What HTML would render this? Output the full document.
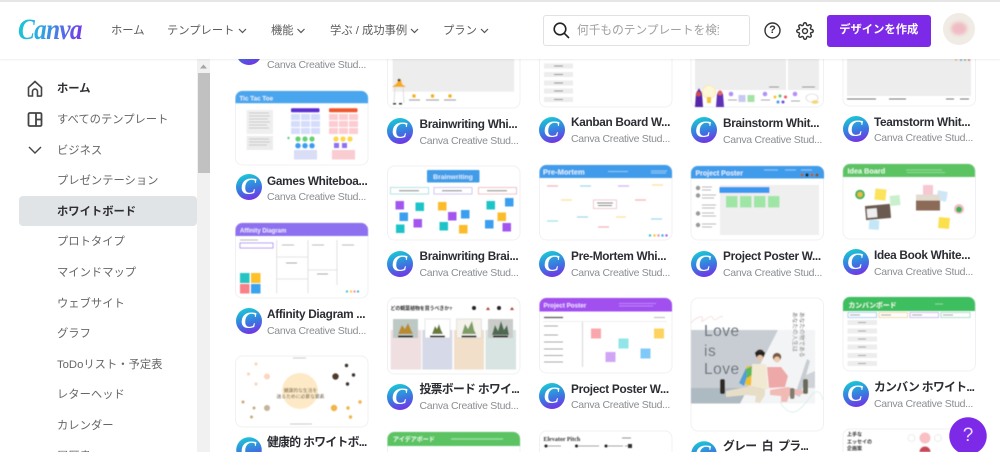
<!DOCTYPE html>
<html lang="ja"><head><meta charset="utf-8"><title>Canva</title>
<style>
html,body{margin:0;padding:0;width:1000px;height:452px;overflow:hidden;background:#fff}
body{font-family:"Liberation Sans","Noto Sans CJK JP",sans-serif;color:#555}
#w{position:absolute;left:0;top:0;width:1000px;height:452px;overflow:hidden;background:#fff}
#w div,#w span{position:absolute;white-space:nowrap}
#w svg{position:absolute;left:0;top:0}
#w .t{font-weight:bold;font-size:11.8px;line-height:16px;color:#2b2d33;letter-spacing:-.3px}
#w .j{letter-spacing:-.65px}
#w .s{font-size:10.5px;line-height:16px;color:#8b8e93;letter-spacing:-.3px}
#w .a{width:26px;height:26px;border-radius:50%;background:linear-gradient(165deg,#18cdd4 5%,#3a78e0 55%,#7a2be6 95%);background-size:26px 26px;background-repeat:no-repeat;color:#fff;font:italic bold 23px/25px "Liberation Serif",serif;text-align:center;text-indent:-1px}
#w .c{border-radius:0;overflow:hidden;-webkit-mask:radial-gradient(circle 13px at 13px 13px,#000 96%,transparent 100%);mask:radial-gradient(circle 13px at 13px 13px,#000 96%,transparent 100%)}
#w .n{font-size:11.3px;line-height:16px;color:#666;left:57px}
#w .h{font-size:11.3px;line-height:16px;color:#5c5c5c;top:23px}
.st text{font-family:"Liberation Sans","Noto Sans CJK JP",sans-serif}
</style></head><body><div id="w">

<svg width="1000" height="452" viewBox="0 0 1000 452" class="st">
<defs><filter id="b"><feGaussianBlur stdDeviation=".5"/></filter></defs>
<g fill="#fff" stroke="#f0f1f2" stroke-width="1">
<rect x="235.500" y="20" width="132.500" height="28" rx="7"/>
<rect x="235.500" y="91" width="132.500" height="74" rx="7"/>
<rect x="235.500" y="223" width="132.500" height="75" rx="7"/>
<rect x="235.500" y="356" width="132.500" height="71" rx="7"/>
<rect x="387.500" y="30" width="132.500" height="78" rx="7"/>
<rect x="387.500" y="166" width="132.500" height="74" rx="7"/>
<rect x="387.500" y="298" width="132.500" height="76" rx="7"/>
<path d="M387.500 452V439a7 7 0 0 1 7-7H513a7 7 0 0 1 7 7v13"/>
<rect x="539.500" y="30" width="132.500" height="77" rx="7"/>
<rect x="539.500" y="165" width="132.500" height="75" rx="7"/>
<rect x="539.500" y="298" width="132.500" height="75" rx="7"/>
<path d="M539.500 452V438a7 7 0 0 1 7-7H665a7 7 0 0 1 7 7v14"/>
<rect x="691" y="30" width="132.500" height="77" rx="7"/>
<rect x="691" y="166" width="132.500" height="74" rx="7"/>
<rect x="691" y="298" width="132.500" height="133" rx="7"/>
<rect x="843" y="30" width="132.500" height="76" rx="7"/>
<rect x="843" y="164" width="132.500" height="75" rx="7"/>
<rect x="843" y="297" width="132.500" height="74" rx="7"/>
<path d="M843 452V436a7 7 0 0 1 7-7H968a7 7 0 0 1 7 7v16"/>
</g>
<g filter="url(#b)">
<!-- Tic tac toe -->
<path d="M235.500 103.300V98a7 7 0 0 1 7-7H361a7 7 0 0 1 7 7v5.300z" fill="#4aa5ee"/>
<text x="239.500" y="100.500" font-size="6.300" font-weight="bold" fill="#dff0ff">Tic Tac Toe</text>
<rect x="246.700" y="110" width="26.300" height="24" fill="#efefef"/><rect x="246.700" y="136" width="26.300" height="14" fill="#ececec"/>
<path d="M249 113h20M249 116h21M249 119h19M249 122h21M249 125h18M249 128h20M249 139h20M249 142h21M249 145h18" stroke="#bbb" stroke-width=".7"/>
<rect x="291" y="108.300" width="28.500" height="4" rx="1" fill="#5a2fd2"/><rect x="329" y="108.300" width="28.500" height="4" rx="1" fill="#f0562e"/>
<g fill="#d6ddfb"><rect x="291" y="114" width="9" height="6"/><rect x="301" y="114" width="9" height="6"/><rect x="311" y="114" width="9" height="6"/><rect x="291" y="121" width="9" height="6"/><rect x="301" y="121" width="9" height="6"/><rect x="311" y="121" width="9" height="6"/><rect x="291" y="128" width="9" height="6"/><rect x="301" y="128" width="9" height="6"/><rect x="311" y="128" width="9" height="6"/></g>
<g fill="#fbcdd2"><rect x="329" y="114" width="9" height="6"/><rect x="339" y="114" width="9" height="6"/><rect x="349" y="114" width="9" height="6"/><rect x="329" y="121" width="9" height="6"/><rect x="339" y="121" width="9" height="6"/><rect x="349" y="121" width="9" height="6"/><rect x="329" y="128" width="9" height="6"/><rect x="339" y="128" width="9" height="6"/><rect x="349" y="128" width="9" height="6"/></g>
<g fill="#63d173"><circle cx="298" cy="139" r="2.600"/><circle cx="305" cy="139" r="2.600"/><circle cx="312" cy="139" r="2.600"/><circle cx="288.500" cy="138" r="1.200"/></g>
<g fill="#3d9cf0"><circle cx="298" cy="145.700" r="2.700"/><circle cx="305" cy="145.700" r="2.700"/><circle cx="312" cy="145.700" r="2.700"/></g>
<g fill="#fdd648"><circle cx="336" cy="139" r="2.600"/><circle cx="343" cy="139" r="2.600"/><circle cx="350" cy="139" r="2.600"/></g>
<rect x="334" y="143" width="5" height="5" fill="#9270f2"/><rect x="342" y="143" width="5" height="5" fill="#9270f2"/>
<rect x="294" y="150" width="23" height="9.500" fill="#d9ddf6"/><rect x="332" y="150" width="23" height="9.500" fill="#f9ccd2"/>

<!-- Affinity -->
<path d="M235.500 236v-6a7 7 0 0 1 7-7H361a7 7 0 0 1 7 7v6z" fill="#8d6ff0"/>
<text x="240" y="232.500" font-size="6" font-weight="bold" fill="#efe9ff">Affinity Diagram</text>
<rect x="240" y="243" width="33" height="5" fill="#fff" stroke="#9a6af0" stroke-width=".7"/>
<path d="M240 240h18M282 245h12M312 245h12M342 245h12" stroke="#bbb" stroke-width="1"/>
<path d="M276.700 240V293M308 240V293M337 240V285M277 279h31M308 270h29M277 257h31" stroke="#ccc" stroke-width=".6" fill="none"/>
<path d="M286 263h11M317 274h11" stroke="#aaa" stroke-width="1"/>
<rect x="240" y="273" width="9.500" height="10" fill="#27c3c3"/><rect x="251" y="273" width="9.500" height="10" fill="#fcc02c"/><rect x="240" y="284" width="9.500" height="9.500" fill="#f88089"/><rect x="251" y="284" width="9.500" height="9.500" fill="#3aa2ee"/>
<circle cx="347" cy="291.500" r="1.100" fill="#27c3c3"/><circle cx="351" cy="291.500" r="1.100" fill="#fcc02c"/><circle cx="354.500" cy="291.500" r="1.100" fill="#f88089"/><circle cx="358" cy="291.500" r="1.100" fill="#3aa2ee"/>

<!-- Health -->
<circle cx="300" cy="391" r="18" fill="#fde9c6"/>
<text x="300.500" y="392" font-size="4.800" text-anchor="middle" fill="#6a5a40">健康的な生活を</text>
<text x="300.500" y="398" font-size="4.800" text-anchor="middle" fill="#6a5a40">送るために必要な要素</text>
<circle cx="335.500" cy="376.500" r="3.200" fill="#4d3a2c"/><circle cx="346.500" cy="365.500" r="1.700" fill="#3b332e"/><circle cx="353.500" cy="375" r="1.700" fill="#3b332e"/><circle cx="347.500" cy="384" r="1.700" fill="#3b332e"/>
<circle cx="267" cy="376.500" r="3" fill="#fbd5bd"/><circle cx="256" cy="364" r="1.500" fill="#fbd1b5"/><circle cx="248.500" cy="374" r="1.500" fill="#fbd1b5"/><circle cx="256" cy="384" r="1.500" fill="#fbd1b5"/>
<circle cx="334" cy="408" r="3.200" fill="#f0b44a"/><circle cx="348" cy="408" r="1.700" fill="#f0b44a"/><circle cx="360" cy="402" r="1.700" fill="#f0b44a"/><circle cx="350.500" cy="417" r="1.700" fill="#f0b44a"/>
<circle cx="267" cy="408" r="3" fill="#c5b39a"/><circle cx="243" cy="402" r="1.500" fill="#c9ab80"/><circle cx="254" cy="408" r="1.500" fill="#c9ab80"/><circle cx="251.500" cy="417" r="1.500" fill="#c9ab80"/>
<path d="M293 358h13M290 424h22" stroke="#bbb" stroke-width=".8"/>

<!-- Col 2 top -->
<rect x="392.700" y="50" width="121.500" height="41.700" fill="#ededed"/>
<path d="M392 87h14l-4-3-1-5h-3l-1 4z" fill="#f4ac1c"/><circle cx="399" cy="80" r="1.300" fill="#333"/><path d="M395 87l-1 16M403 87l1 16" stroke="#ddd" stroke-width="1"/><rect x="393" y="103" width="3" height="1.500" fill="#333"/><rect x="399" y="103" width="3" height="1.500" fill="#333"/>
<g fill="#f5ac18"><circle cx="414" cy="96" r="1.700"/><circle cx="432.500" cy="96" r="1.700"/><circle cx="450" cy="96" r="1.700"/></g>
<path d="M409 100h11M426 100h13M444 100h12" stroke="#aaa" stroke-width="1.300"/>

<!-- Brainwriting -->
<rect x="427" y="170" width="52.500" height="12.500" fill="#3f9be8" rx="1"/>
<text x="453" y="179" font-size="6.800" font-weight="bold" text-anchor="middle" fill="#d7ecff">Brainwriting</text>
<g fill="#fff" stroke-width=".7"><rect x="390.500" y="187.500" width="38" height="6.500" stroke="#8fd3dc"/><rect x="434" y="187.500" width="38" height="6.500" stroke="#bdaaf0"/><rect x="478.500" y="187.500" width="38" height="6.500" stroke="#e8a5b0"/></g>
<path d="M399 190.800h20M442 190.800h20M487 190.800h20" stroke="#777" stroke-width="1"/>
<g fill="#a357ee"><rect x="395.500" y="201" width="8.500" height="8.500"/><rect x="413.500" y="219" width="8.500" height="8.500"/><rect x="448" y="212" width="8.500" height="8.500"/><rect x="502.500" y="223" width="8.500" height="8.500"/></g>
<g fill="#1fc3c8"><rect x="415.500" y="202.500" width="8.500" height="8.500"/><rect x="396" y="224.500" width="8.500" height="8.500"/><rect x="439.500" y="222" width="8.500" height="8.500"/><rect x="486.500" y="201" width="8.500" height="8.500"/></g>
<g fill="#3a9ff0"><rect x="399.500" y="212.500" width="8.500" height="8.500"/><rect x="461" y="210" width="8.500" height="8.500"/><rect x="485" y="220" width="8.500" height="8.500"/><rect x="505" y="198" width="8.500" height="8.500"/></g>
<g fill="#fcbb2c"><rect x="438" y="202" width="8.500" height="8.500"/><rect x="459" y="225" width="8.500" height="8.500"/><rect x="497.500" y="212.500" width="8.500" height="8.500"/></g>

<!-- 投票 -->
<text x="390.500" y="310" font-size="4.900" font-weight="bold" fill="#333">どの観葉植物を買うべきか?</text>
<circle cx="474" cy="308" r="2" fill="#222"/><circle cx="499" cy="308" r="2" fill="#222"/><path d="M486 310l2-3 2 3zM510 310l2-3 2 3z" fill="#a83a30"/>
<rect x="390.700" y="330" width="30.500" height="39.500" fill="#f0dfe1"/><rect x="422.300" y="330" width="30" height="39.500" fill="#d5d9e8"/><rect x="454" y="330" width="30" height="39.500" fill="#f2dfc9"/><rect x="485.500" y="330" width="30.500" height="39.500" fill="#d7e4e2"/>
<rect x="393" y="319" width="25" height="19" fill="#bdc9c4"/><rect x="425" y="319" width="25" height="19" fill="#fff" stroke="#ccc" stroke-width=".5"/><rect x="456.500" y="319" width="25" height="19" fill="#f4f2ea" stroke="#ccc" stroke-width=".5"/><rect x="488" y="319" width="25" height="19" fill="#c9ccc9"/>
<path d="M398 334l4-9 3 4 3-6 3 7 2 4z" fill="#b98b2d"/><path d="M432 334l3-8 2 3 2-5 2 6 2 4z" fill="#677a35"/><path d="M462 334l3-10 3 5 4-8 2 9 2 4z" fill="#7d9c66"/><path d="M492 335l3-10 3 6 3-10 3 9 3-5 2 10z" fill="#4d6a50"/>
<rect x="398" y="335.500" width="15" height="1.800" fill="#111"/><rect x="430" y="335.500" width="15" height="1.800" fill="#111"/><rect x="461.500" y="335.500" width="15" height="1.800" fill="#111"/><rect x="493" y="335.500" width="15" height="1.800" fill="#111"/>

<!-- Kanban list top -->
<g fill="#ededed"><rect x="544" y="63.500" width="29" height="5"/><rect x="544" y="72" width="29" height="5"/><rect x="544" y="80.500" width="29" height="5"/><rect x="544" y="88.500" width="29" height="5"/><rect x="544" y="97" width="29" height="5"/></g>
<path d="M554 66h9M554 74.500h9M554 83h9M554 91h9M554 99.500h9" stroke="#888" stroke-width=".9"/>
<g fill="#ededed"><rect x="544" y="50" width="29" height="9"/></g>

<!-- Pre-mortem -->
<path d="M539.500 178v-6a7 7 0 0 1 7-7H665a7 7 0 0 1 7 7v6z" fill="#3f9ceb"/>
<text x="543" y="174.500" font-size="7.500" font-weight="bold" fill="#dff0ff">Pre-Mortem</text>
<path d="M608 171.500h20M651 171h16M651 173h15" stroke="#a8d4f8" stroke-width=".8"/>
<rect x="593.500" y="200" width="23" height="8.500" fill="#fff" stroke="#e3a5ad" stroke-width=".6"/><path d="M597 203h16M598 205.500h14" stroke="#555" stroke-width=".9"/>
<g stroke-width="1.300"><path d="M547 186h11" stroke="#f5b5bc"/><path d="M580 186h11" stroke="#a5d9ec"/><path d="M618 186h11" stroke="#d0b4f5"/><path d="M652 185h11" stroke="#fbe2a0"/><path d="M561 200h11" stroke="#fbe2a0"/><path d="M635 200h11" stroke="#f5b5bc"/><path d="M547 221h11" stroke="#a5e2e2"/><path d="M577 217h11" stroke="#a5d9ec"/><path d="M616 217h10" stroke="#fbe2a0"/><path d="M651 219h11" stroke="#a5d9ec"/><path d="M598 227h11" stroke="#f5b5bc"/></g>
<g><circle cx="650" cy="235.500" r="1.200" fill="#2cc3c8"/><circle cx="654.500" cy="235.500" r="1.200" fill="#fcbb2c"/><circle cx="658.500" cy="235.500" r="1.200" fill="#f58a8a"/><circle cx="662.500" cy="235.500" r="1.200" fill="#3fa0ee"/><circle cx="666.500" cy="235.500" r="1.200" fill="#a357ee"/></g>

<!-- project poster purple -->
<path d="M539.500 311.500V305a7 7 0 0 1 7-7H665a7 7 0 0 1 7 7v6.500z" fill="#a24ff0"/>
<text x="543.500" y="307.500" font-size="6.300" font-weight="bold" fill="#f0dcff">Project Poster</text>
<path d="M619 303.500h37M619 306h34" stroke="#c493f6" stroke-width=".8"/>
<path d="M544 317.500h19" stroke="#555" stroke-width="1.200"/><path d="M654 317.500h11" stroke="#bbb" stroke-width="1"/>
<path d="M543 321.500h124" stroke="#ddd" stroke-width=".5"/><path d="M582.500 322V367" stroke="#ccc" stroke-width=".8"/>
<path d="M544 326h14M544 335h14M544 342h19M544 349h19M544 355.500h19M544 362h19" stroke="#aaa" stroke-width=".9"/>
<rect x="591" y="328.500" width="10" height="10" fill="#f9a7ad"/><rect x="654" y="328.500" width="10" height="10" fill="#fdd35f"/><rect x="618.500" y="338.500" width="10" height="10" fill="#8fe5e8"/><rect x="640.500" y="348.500" width="10" height="10" fill="#7fc9f8"/><rect x="605.500" y="352" width="10" height="10" fill="#d1a5f5"/>

<!-- col4 top -->
<rect x="695" y="50" width="91" height="40" fill="#ededed"/><rect x="788" y="50" width="31" height="40" fill="#ededed"/>
<path d="M769 87h10M802 87h13" stroke="#888" stroke-width="1"/>
<path d="M695 107l1-14 3-5 3 5 1 14z" fill="#5626a9"/><circle cx="698.500" cy="94" r="2.400" fill="#d7473f"/>
<circle cx="709" cy="92" r="6.500" fill="#fff8d8" stroke="#f6e6a0" stroke-width=".8"/><rect x="707" y="97" width="4" height="6" fill="#f3c33a"/>
<path d="M716 107l1-13 3-4 3 4 1 13z" fill="#6030b8"/><circle cx="720" cy="93" r="2.400" fill="#e2665e"/>
<circle cx="731" cy="94" r="2.300" fill="#b091f4"/><rect x="738.500" y="95" width="7" height="7" fill="#c7c9f3"/><rect x="747.500" y="95" width="7" height="7" fill="#a4e2a6"/><circle cx="765" cy="94" r="2.300" fill="#b091f4"/><circle cx="795" cy="94" r="2.300" fill="#b091f4"/>
<circle cx="775" cy="97" r="1.500" fill="#f7c52e"/><circle cx="780" cy="96" r="1.500" fill="#58c36c"/><circle cx="785.500" cy="97" r="1.500" fill="#f25656"/><circle cx="778" cy="102" r="1.500" fill="#3d9cf0"/><circle cx="783" cy="102" r="1.500" fill="#6a4ae0"/>
<ellipse cx="812" cy="98" rx="6" ry="4" fill="#fff" stroke="#ccc" stroke-width=".6"/><ellipse cx="815" cy="102" rx="3.500" ry="1.800" fill="#f3d772"/>
<path d="M728 100h9M761 100h9M791 101h9" stroke="#aaa" stroke-width=".9"/>

<!-- col5 top -->
<rect x="847" y="50" width="124" height="46" fill="#ededed"/>
<path d="M847 99h29M889 99h17M946 99h8M960 99h9" stroke="#777" stroke-width=".9"/>
<circle cx="956" cy="60" r="1" fill="#f4b42c"/><circle cx="961" cy="60" r="1" fill="#3f9ceb"/><circle cx="965" cy="60" r="1" fill="#58c36c"/><circle cx="969" cy="60" r="1" fill="#e85050"/>

<!-- project poster blue -->
<path d="M691 178.500V173a7 7 0 0 1 7-7H817a7 7 0 0 1 7 7v5.500z" fill="#3f9ceb"/>
<text x="695.500" y="175.500" font-size="7" font-weight="bold" fill="#dff0ff">Project Poster</text>
<path d="M764 170h14M785 170h11M801 170h11" stroke="#a8d4f8" stroke-width=".8"/>
<circle cx="802" cy="175" r="1.600" fill="#a46a33"/><circle cx="807" cy="175" r="1.600" fill="#222"/><circle cx="812" cy="175" r="1.600" fill="#a46a33"/><circle cx="817" cy="175" r="1.600" fill="#7a5b3a"/>
<rect x="720" y="185" width="99" height="50" fill="#efefef"/>
<rect x="719.500" y="187" width="50" height="6" fill="#3b97ef" rx=".5"/>
<rect x="726" y="196" width="11.500" height="11.500" fill="#9fe5a6"/><rect x="740" y="196" width="11.500" height="11.500" fill="#9fe5a6"/><rect x="754" y="196" width="11.500" height="11.500" fill="#9fe5a6"/><rect x="768" y="196" width="11.500" height="11.500" fill="#9fe5a6"/>
<g fill="#999"><circle cx="698" cy="188" r="2.200"/><circle cx="698" cy="195.500" r="2.200"/><circle cx="698" cy="213.500" r="2.200"/><circle cx="698" cy="225" r="2.200"/></g>
<path d="M702 187h10M702 190h9M702 195h14M702 198h12M702 205h14M702 208h13M702 213h12M702 216h14M702 224h14M702 227h10" stroke="#bbb" stroke-width=".9"/>

<!-- Idea board -->
<path d="M843 177v-6a7 7 0 0 1 7-7H968a7 7 0 0 1 7 7v6z" fill="#5cc364"/>
<text x="847.500" y="173.500" font-size="7.300" font-weight="bold" fill="#e6fbe6">Idea Board</text>
<path d="M906 170h36M907 172.500h38" stroke="#8edb92" stroke-width=".9"/>
<circle cx="860" cy="194.500" r="4.800" fill="#43b05b"/><circle cx="860" cy="194.500" r="2.800" fill="#e7be3a"/>
<rect x="875" y="189" width="11" height="11" fill="#fbe35b" transform="rotate(6 880 194)"/>
<rect x="890" y="195.500" width="10" height="10" fill="#c9f0cc" transform="rotate(-6 895 200)"/>
<rect x="865.500" y="205" width="25" height="14" fill="#6b5a50" transform="rotate(-5 878 212)"/><rect x="867" y="208" width="10" height="9" fill="#eee" transform="rotate(-5 878 212)"/>
<rect x="869" y="220" width="10" height="9.500" fill="#c4e6f7" transform="rotate(4 874 225)"/>
<rect x="923" y="185" width="10" height="10" fill="#f8c8d2"/>
<rect x="937" y="191" width="10" height="10" fill="#cfe6f7" transform="rotate(10 942 196)"/>
<rect x="916" y="194.500" width="24" height="16" fill="#8b6a58"/><rect x="916" y="194.500" width="24" height="6" fill="#e3dbd0"/>
<circle cx="959" cy="209" r="5" fill="#f3bcc5"/><circle cx="959" cy="209.500" r="3" fill="#3ab356"/>
<rect x="938.500" y="217.500" width="11" height="11" fill="#fbe04e" transform="rotate(5 944 223)"/>

<!-- Love -->
<rect x="691" y="330" width="124" height="73.500" fill="#f3f4f5"/>
<path d="M691 330H778L740 403.500H691z" fill="#c8cdd3"/>
<path d="M691 388H748L740 403.500H691z" fill="#aebac1"/>
<path d="M806 375l9-4v17h-12z" fill="#cfd3d7"/>
<path d="M795 395l12-36 3 2-10 36z" fill="#c8cdd3"/>
<path d="M739 383l8-17h6l-2 20z" fill="#f0c02c"/><path d="M739 383l7-15 1 9-3 9z" fill="#4f9fd8"/><path d="M746 369l6-3v9l-5 3z" fill="#5cb85c"/>
<path d="M752 364h14l2 25-17 1z" fill="#f2e9d2"/><path d="M767 367h14l7 9-3 11-16 1z" fill="#eea8a8"/>
<circle cx="760" cy="354" r="4.600" fill="#3a2e2a"/><rect x="755" y="352" width="10" height="2.500" fill="#222"/><circle cx="777" cy="357" r="4.300" fill="#7a5a40"/><circle cx="760" cy="358" r="3" fill="#e8c4a5"/><circle cx="777" cy="359.500" r="3" fill="#efcbb0"/>
<path d="M726 391l26-5 13 3 0 6-5 8-5-1 1-6-10-1-20 2z" fill="#e7dec8"/><path d="M770 390l18-3 15 4v3l-14 2-2 6-6 0 0-6-11-1z" fill="#f1bab5"/>
<rect x="720" y="379" width="5" height="15" fill="#2e2a28" rx="2"/><rect x="803" y="379" width="5" height="15" fill="#6a6a5a" rx="2"/><rect x="790" y="388" width="4.500" height="11" fill="#7d7d70" rx="2"/>
<text x="704" y="336" font-size="15.500" letter-spacing=".5" fill="#67707a" font-family="Liberation Sans">Love</text>
<text x="704" y="356" font-size="15.500" letter-spacing=".5" fill="#67707a" font-family="Liberation Sans">is</text>
<text x="704" y="374" font-size="15.500" letter-spacing=".5" fill="#67707a" font-family="Liberation Sans">Love</text>
<text transform="translate(793 312) rotate(90)" font-size="5.700" fill="#777">あなたの人生は</text>
<text transform="translate(800 312) rotate(90)" font-size="5.700" fill="#777">あなたの物である</text>
<path d="M691 323c5-6 14-9 11-3s10-8 11-2 10-6 9 0" fill="none" stroke="#f4d5d5" stroke-width=".7"/>
<path d="M780 402c12 20 22 6 30-5s12-2 13 3" fill="none" stroke="#cdeae8" stroke-width=".7"/>

<!-- Kanban -->
<path d="M843 311v-7a7 7 0 0 1 7-7H968a7 7 0 0 1 7 7v7z" fill="#3dbe5f"/>
<text x="848.500" y="307.500" font-size="6.800" fill="#e8fbe8" font-weight="bold">カンバンボード</text>
<path d="M935 304h8" stroke="#9de3ac" stroke-width=".8"/>
<g fill="#fff" stroke-width=".6"><rect x="848" y="312.500" width="28.500" height="5" stroke="#6ab0e8"/><rect x="879" y="312.500" width="28.500" height="5" stroke="#edc060"/><rect x="910" y="312.500" width="28.500" height="5" stroke="#a98ae8"/><rect x="941" y="312.500" width="29" height="5" stroke="#72c8a8"/></g>
<path d="M850 315h10M881 315h10M912 315h10M943 315h10" stroke="#777" stroke-width=".8"/>
<g fill="#ededed"><rect x="847.500" y="320" width="29.500" height="5"/><rect x="847.500" y="328.500" width="29.500" height="5"/><rect x="847.500" y="336.500" width="29.500" height="5"/><rect x="847.500" y="344.500" width="29.500" height="5"/><rect x="847.500" y="353" width="29.500" height="5"/><rect x="847.500" y="361" width="29.500" height="5"/></g>
<path d="M858 322.500h8M858 331h8M858 339h8M858 347h8M858 355.500h8M858 363.500h8" stroke="#888" stroke-width=".8"/>

<!-- bottom -->
<path d="M387.500 446v-7a7 7 0 0 1 7-7H513a7 7 0 0 1 7 7v7z" fill="#5cc364"/>
<text x="393" y="441.500" font-size="6" fill="#e3fae4" font-weight="bold">アイデアボード</text>
<path d="M451 439h52" stroke="#9ce0a0" stroke-width="1.200"/>
<text x="543.500" y="441" font-size="6" font-weight="bold" fill="#333" style="font-family:'Liberation Serif',serif">Elevator Pitch</text>
<path d="M544 446h17M576 446h23M606 446h17M625 446h5" stroke="#888" stroke-width=".8"/><circle cx="546" cy="446" r="1.500" fill="#222"/><circle cx="576.500" cy="446" r="1.500" fill="#222"/><circle cx="606" cy="446" r="1.500" fill="#222"/><rect x="628" y="444" width="4" height="4" fill="#333"/>
<path d="M622 438h9" stroke="#777" stroke-width=".8"/>
<text x="847" y="436" font-size="5" font-weight="bold" fill="#333">上手な</text>
<text x="847" y="443.500" font-size="5" font-weight="bold" fill="#333">エッセイの</text>
<text x="847" y="450" font-size="5" font-weight="bold" fill="#333">企画案</text>
<circle cx="925" cy="438" r="5.500" fill="#f9c0c4"/><circle cx="911.500" cy="438" r="3.500" fill="#fff" stroke="#ddd" stroke-width=".6"/><circle cx="938" cy="438" r="3.500" fill="#fff" stroke="#ddd" stroke-width=".6"/><path d="M919.500 452a5.500 5.500 0 0 1 11 0z" fill="#c84a55"/>
</g>
</svg>

<div class="s" style="left:267px;top:57px">Canva Creative Stud...</div>
<div class="a" style="left:236px;top:39px">C</div>
<div class="a" style="left:236px;top:174px">C</div><div class="t" style="left:267px;top:173px">Games Whiteboa...</div><div class="s" style="left:267px;top:189px">Canva Creative Stud...</div>
<div class="a" style="left:236px;top:308px">C</div><div class="t" style="left:267px;top:306px">Affinity Diagram ...</div><div class="s" style="left:267px;top:323px">Canva Creative Stud...</div>
<div class="a c" style="left:236px;top:437px;height:15px">C</div><div class="t j" style="left:267px;top:434px">健康的 ホワイトボ...</div>

<div class="a" style="left:387px;top:118px">C</div><div class="t" style="left:419.500px;top:116px">Brainwriting Whi...</div><div class="s" style="left:419.500px;top:133px">Canva Creative Stud...</div>
<div class="a" style="left:387px;top:251px">C</div><div class="t" style="left:419.500px;top:248px">Brainwriting Brai...</div><div class="s" style="left:419.500px;top:265px">Canva Creative Stud...</div>
<div class="a" style="left:387px;top:384px">C</div><div class="t j" style="left:419.500px;top:381px">投票ボード ホワイ...</div><div class="s" style="left:419.500px;top:398px">Canva Creative Stud...</div>

<div class="a" style="left:539px;top:117px">C</div><div class="t" style="left:571px;top:114px">Kanban Board W...</div><div class="s" style="left:571px;top:131px">Canva Creative Stud...</div>
<div class="a" style="left:539px;top:251px">C</div><div class="t" style="left:571px;top:248px">Pre-Mortem Whi...</div><div class="s" style="left:571px;top:265px">Canva Creative Stud...</div>
<div class="a" style="left:539px;top:383px">C</div><div class="t" style="left:571px;top:381px">Project Poster W...</div><div class="s" style="left:571px;top:397px">Canva Creative Stud...</div>

<div class="a" style="left:690.500px;top:117px">C</div><div class="t" style="left:723px;top:115px">Brainstorm Whit...</div><div class="s" style="left:723px;top:132px">Canva Creative Stud...</div>
<div class="a" style="left:690.500px;top:251px">C</div><div class="t" style="left:723px;top:248px">Project Poster W...</div><div class="s" style="left:723px;top:265px">Canva Creative Stud...</div>
<div class="a c" style="left:690.500px;top:441px;height:11px">C</div><div class="t j" style="left:723px;top:438px;height:14px;overflow:hidden">グレー&nbsp; 白&nbsp; プラ...</div>

<div class="a" style="left:842.500px;top:116px">C</div><div class="t" style="left:874px;top:114px">Teamstorm Whit...</div><div class="s" style="left:874px;top:130px">Canva Creative Stud...</div>
<div class="a" style="left:842.500px;top:249px">C</div><div class="t" style="left:874px;top:247px">Idea Book White...</div><div class="s" style="left:874px;top:264px">Canva Creative Stud...</div>
<div class="a" style="left:842.500px;top:381px">C</div><div class="t j" style="left:874px;top:379px">カンバン ホワイト...</div><div class="s" style="left:874px;top:396px">Canva Creative Stud...</div>

<div style="left:949px;top:417px;width:38px;height:35px;overflow:hidden;background:radial-gradient(circle 19px at 19px 19px,#7d2ae8 97%,transparent 100%);color:#eadcff;font-size:19px;line-height:38px;text-align:center">?</div>

<!-- sidebar -->
<div style="left:0;top:59px;width:197px;height:393px;background:#fff"></div>
<div style="left:197px;top:59px;width:13px;height:393px;background:#f1f1f1"></div>
<div style="left:197.500px;top:73px;width:12px;height:100px;background:#c1c1c1"></div>
<svg style="left:199px;top:62px" width="9" height="8"><path d="M1 6.500L4.500 2.500 8 6.500z" fill="#a5a5a5"/></svg>
<div style="left:18.500px;top:196px;width:178.500px;height:30px;background:#e1e4e7;border-radius:4px"></div>
<svg style="left:27px;top:80px" width="16" height="100" fill="none" stroke="#444" stroke-width="1.600"><path d="M1.500 7.500L8 1.500l6.500 6v7.800a.8.8 0 0 1-.8.8H10.500v-4.500a2.500 2.500 0 0 0-5 0V16H2.300a.8.8 0 0 1-.8-.8z"/><rect x="1.500" y="33" width="13" height="13" rx="1.300" stroke-width="1.800"/><path d="M9 33v13M9 39.500h5.500" stroke-width="1.800"/><path d="M2 67l6 6 6-6" stroke-width="1.400"/></svg>
<div class="n" style="top:81px;color:#2e2e33;font-weight:bold">ホーム</div>
<div class="n" style="top:112px">すべてのテンプレート</div>
<div class="n" style="top:143px">ビジネス</div>
<div class="n" style="top:173px">プレゼンテーション</div>
<div class="n" style="top:204px;color:#2e2e33;font-weight:bold">ホワイトボード</div>
<div class="n" style="top:234px">プロトタイプ</div>
<div class="n" style="top:265px">マインドマップ</div>
<div class="n" style="top:296px">ウェブサイト</div>
<div class="n" style="top:326px">グラフ</div>
<div class="n" style="top:357px">ToDoリスト・予定表</div>
<div class="n" style="top:387px">レターヘッド</div>
<div class="n" style="top:418px">カレンダー</div>
<div class="n" style="top:448px;height:4px;line-height:18px;overflow:hidden">履歴書</div>

<!-- header -->
<div style="left:0;top:0;width:1000px;height:59px;background:#fff;border-top:2px solid #e6e6e6;box-sizing:border-box;box-shadow:0 1px 2px rgba(0,0,0,.07)"></div>
<div style="left:18px;top:10px;font:italic bold 30px/40px 'Liberation Serif',serif;letter-spacing:-.8px;background:linear-gradient(100deg,#17c9d6 0%,#2ea9e0 35%,#5a63e8 70%,#7d2ae8 100%);-webkit-background-clip:text;background-clip:text;color:transparent;padding-right:4px;transform:scaleX(.84);transform-origin:left center">Canva</div>
<div class="h" style="left:111px">ホーム</div>
<div class="h" style="left:167px">テンプレート</div>
<div class="h" style="left:271px">機能</div>
<div class="h" style="left:330px">学ぶ / 成功事例</div>
<div class="h" style="left:443px">プラン</div>
<svg style="left:0;top:0" width="1000" height="60" fill="none" stroke="#555" stroke-width="1.200"><path d="M239 29l3.500 3.500L246 29M297.500 29l3.500 3.500 3.500-3.500M411 29l3.500 3.500L418 29M481 29l3.500 3.500L488 29"/></svg>
<div style="left:542.500px;top:15px;width:207px;height:31px;border:1px solid #dfe1e4;border-radius:3px;box-sizing:border-box;background:#fff"></div>
<svg style="left:552px;top:21px" width="19" height="19" fill="none" stroke="#222" stroke-width="1.600"><circle cx="8" cy="8" r="5.800"/><path d="M12.300 12.300L17 17"/></svg>
<div style="left:577px;top:16px;width:142px;height:31px;overflow:hidden;font-size:11.700px;line-height:30px;color:#a0a0a0">何千ものテンプレートを検索</div>
<svg style="left:763px;top:20px" width="20" height="20" fill="none" stroke="#333" stroke-width="1.400"><circle cx="9.500" cy="10.500" r="7.500"/></svg>
<div style="left:763px;top:20px;width:19px;font-size:11px;line-height:21px;text-align:center;color:#333;font-weight:bold">?</div>
<svg style="left:795.500px;top:22px" width="18" height="18" viewBox="0 0 24 24" fill="none" stroke="#333" stroke-width="1.900"><circle cx="12" cy="12" r="3.300"/><path d="M19.400 15a1.650 1.650 0 0 0 .33 1.820l.06.06a2 2 0 0 1 0 2.830 2 2 0 0 1-2.830 0l-.06-.06a1.650 1.650 0 0 0-1.820-.33 1.650 1.650 0 0 0-1 1.510V21a2 2 0 0 1-2 2 2 2 0 0 1-2-2v-.09A1.650 1.650 0 0 0 9 19.400a1.650 1.650 0 0 0-1.820.33l-.06.06a2 2 0 0 1-2.830 0 2 2 0 0 1 0-2.830l.06-.06a1.650 1.650 0 0 0 .33-1.820 1.650 1.650 0 0 0-1.510-1H3a2 2 0 0 1-2-2 2 2 0 0 1 2-2h.09A1.650 1.650 0 0 0 4.600 9a1.650 1.650 0 0 0-.33-1.820l-.06-.06a2 2 0 0 1 0-2.830 2 2 0 0 1 2.830 0l.06.06a1.650 1.650 0 0 0 1.820.33H9a1.650 1.650 0 0 0 1-1.510V3a2 2 0 0 1 2-2 2 2 0 0 1 2 2v.09a1.650 1.650 0 0 0 1 1.510 1.650 1.650 0 0 0 1.820-.33l.06-.06a2 2 0 0 1 2.830 0 2 2 0 0 1 0 2.830l-.06.06a1.650 1.650 0 0 0-.33 1.820V9a1.650 1.650 0 0 0 1.510 1H21a2 2 0 0 1 2 2 2 2 0 0 1-2 2h-.09a1.650 1.650 0 0 0-1.510 1z"/></svg>
<div style="left:827px;top:15px;width:103.500px;height:31.500px;border-radius:3px;background:#7d2ae8;color:#fff;font-size:11.300px;font-weight:bold;line-height:31px;text-align:center">デザインを作成</div>
<div style="left:943px;top:13px;width:32px;height:32px;border-radius:50%;background:#f0ebe4"></div>
<div style="left:951px;top:22px;width:16px;height:13px;border-radius:50%;background:#f0bcc4;filter:blur(1.500px)"></div>
</div></body></html>
